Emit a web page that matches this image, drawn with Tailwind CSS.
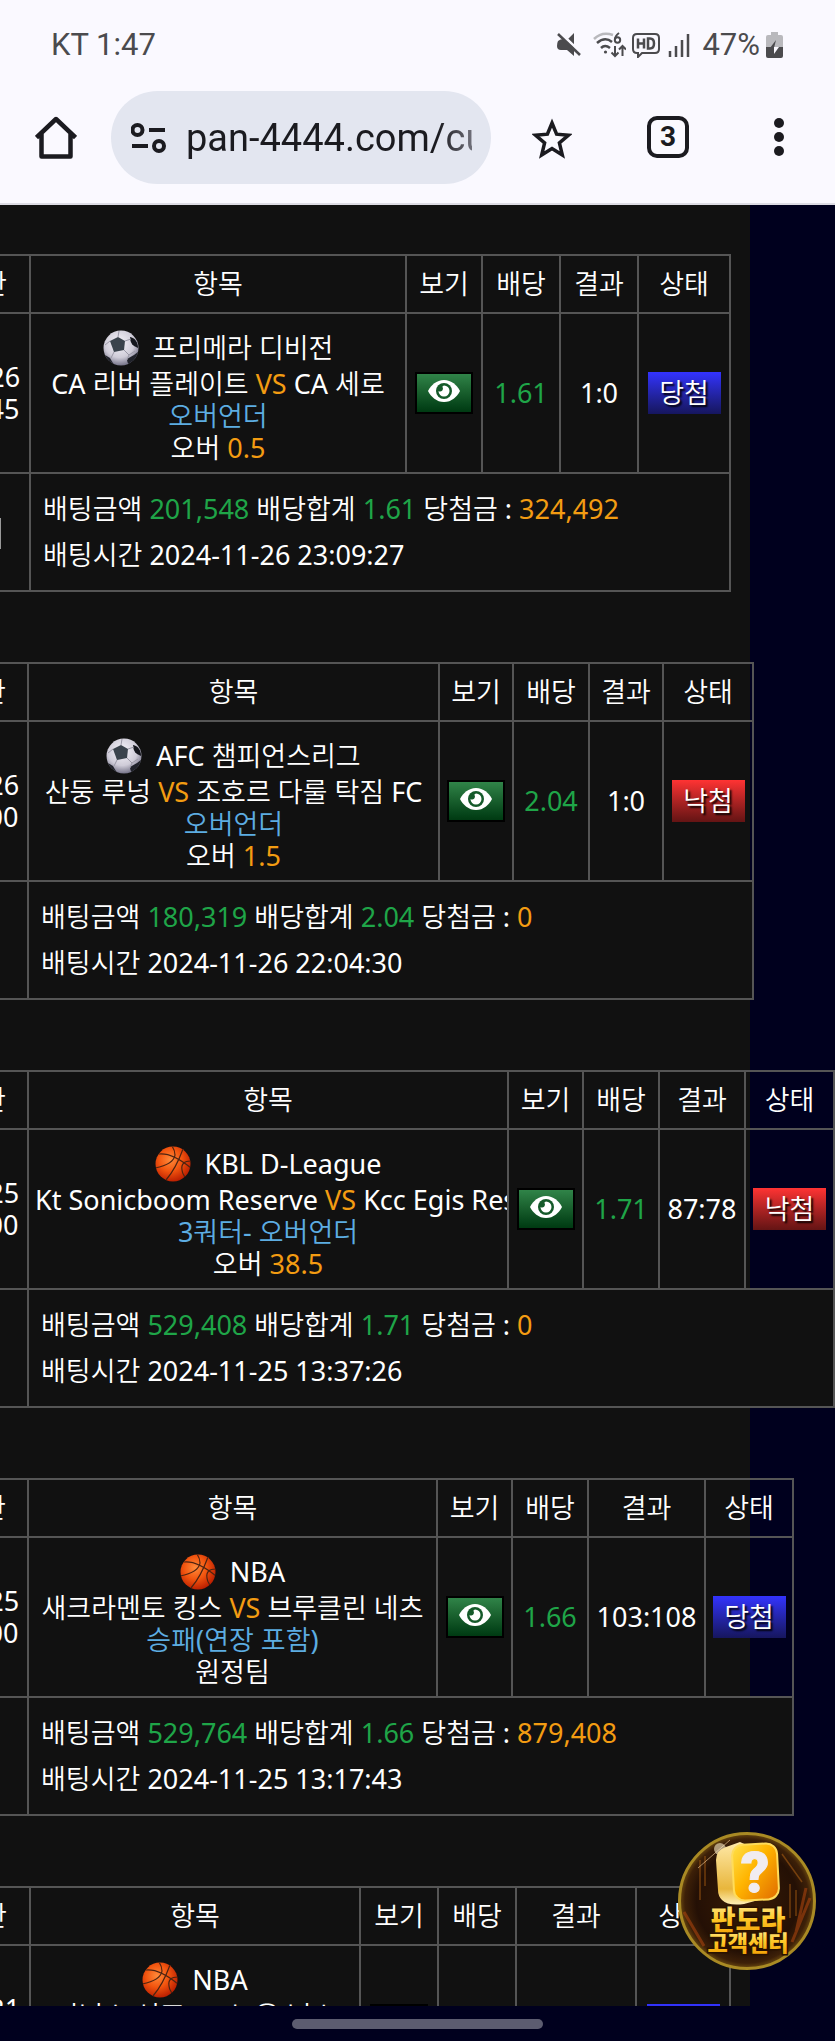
<!doctype html>
<html lang="ko">
<head>
    <meta charset="UTF-8">
    <meta name="viewport" content="width=device-width, initial-scale=1">
    <title>배팅내역</title>
    <script src="https://cdn.jsdelivr.net/npm/@tailwindcss/browser@4"></script>
</head>
<body class="flex h-screen flex-col overflow-hidden bg-[#00001e] font-['Noto_Sans','Noto_Sans_CJK_KR_DemiLight','Noto_Sans_CJK_KR',sans-serif]">
    <!-- shared shapes -->
    <svg class="absolute size-0" aria-hidden="true">
        <defs>
            <radialGradient id="ball-white" cx="45%" cy="35%" r="65%">
                <stop offset="0" stop-color="#f6f4fa"/>
                <stop offset="0.65" stop-color="#cfccd8"/>
                <stop offset="1" stop-color="#77758a"/>
            </radialGradient>
            <radialGradient id="ball-orange" cx="42%" cy="38%" r="65%">
                <stop offset="0" stop-color="#ff8a3a"/>
                <stop offset="0.5" stop-color="#f2550f"/>
                <stop offset="1" stop-color="#b81c00"/>
            </radialGradient>
            <clipPath id="ball-clip"><circle cx="18" cy="18" r="17.5"/></clipPath>
            <linearGradient id="gold-text" x1="0" y1="0" x2="0" y2="1">
                <stop offset="0" stop-color="#fff3b0"/>
                <stop offset="0.5" stop-color="#ffc928"/>
                <stop offset="1" stop-color="#f09a00"/>
            </linearGradient>
            <linearGradient id="cube" x1="0" y1="0" x2="1" y2="1">
                <stop offset="0" stop-color="#ffe14a"/>
                <stop offset="0.45" stop-color="#ffb400"/>
                <stop offset="1" stop-color="#e06a00"/>
            </linearGradient>
            <linearGradient id="cube-side" x1="0" y1="0" x2="0" y2="1">
                <stop offset="0" stop-color="#ffe9a8"/>
                <stop offset="0.75" stop-color="#e8b63c"/>
                <stop offset="1" stop-color="#fff0b8"/>
            </linearGradient>
            <radialGradient id="coin" cx="50%" cy="50%" r="50%">
                <stop offset="0" stop-color="#3a1c05"/>
                <stop offset="0.75" stop-color="#241005"/>
                <stop offset="0.92" stop-color="#3d2008"/>
                <stop offset="1" stop-color="#6b4a10"/>
            </radialGradient>
        </defs>
        <symbol id="soccer" viewBox="0 0 36 36">
            <circle cx="18" cy="18" r="17.5" fill="url(#ball-white)"/>
            <g clip-path="url(#ball-clip)">
                <path d="M7 11l8-4 7 4-1 9-10 2z" fill="#3a434c"/>
                <path d="M27 7c5 1 8 5 8 11l-4-2c-3-2-4-6-4-9z" fill="#15171d"/>
                <path d="M24 29l7-4 4-3v8l-8 5c-2-1-3-3-3-6z" fill="#20222a"/>
                <path d="M2 25l5 3 4 7-6-2z" fill="#20222a"/>
                <path d="M15 7l1-6M22 11l6-2M21 20l5 5-2 5M11 22l-3 6M7 11L2 15M26 25l6-4" fill="none" stroke="#9a98a6" stroke-width="1"/>
            </g>
        </symbol>
        <symbol id="basket" viewBox="0 0 36 36">
            <circle cx="18" cy="18" r="17.5" fill="url(#ball-orange)"/>
            <g clip-path="url(#ball-clip)" fill="none" stroke="#4d2412" stroke-width="1.2">
                <path d="M4 8c9-1 21 5 32 14"/>
                <path d="M0 22c10-2 19-5 20-13 0-4-1-6-3-9"/>
                <path d="M28 3C24 14 18 26 11 34"/>
                <path d="M36 15c-7 0-10 3-9 9 0 4 3 7 4 9"/>
            </g>
        </symbol>
        <symbol id="eye" viewBox="0 0 32 22">
            <path d="M16 0C8.600 0 3 5 0 11c3 6 8.600 11 16 11s13-5 16-11C29 5 23.400 0 16 0z" fill="#fff"/>
            <circle cx="16" cy="11" r="8" fill="#155a2a"/>
            <path d="M16 5.500a5.500 5.500 0 1 1-5.500 5.500c1 .8 2.600.8 3.600-.2s1.200-2.800.2-4c.5-.7 1.100-1.100 1.700-1.300z" fill="#fff"/>
        </symbol>
    </svg>

    <header class="border-b-2 border-[#dddce4] bg-[#faf9ff] font-[Roboto,sans-serif] text-[#1b1b20]">
        <div class="flex h-[90px] items-center justify-between pr-[52px] pl-[51px] text-[31px] text-[#4b4b4e]">
            <span>KT 1:47</span>
            <div class="flex items-center gap-[6px]">
                <svg class="mr-[6px] h-[26px] w-[24px]" viewBox="0 0 24 26" fill="currentColor">
                    <path d="M1 9q2-2 6-2l10 9v8l-7-6H4q-4 0-4-4 0-3 1-5zM11 7l6-6v12z"/>
                    <path d="M4 1l20 19.500" stroke="#faf9ff" stroke-width="2"/>
                    <path d="M1 2l22 21" stroke="currentColor" stroke-width="2.500"/>
                </svg>
                <svg class="h-[26px] w-[33px]" viewBox="0 0 33 26" fill="none" stroke="currentColor" stroke-width="2.500">
                    <path d="M1 7Q9-1 20 3" stroke="#b9b9bd"/>
                    <path d="M4 11q8-7 15-1M8 16q4-4 9 0"/>
                    <circle cx="12.500" cy="20" r="1.600" fill="currentColor" stroke="none"/>
                    <path d="M26 1q-4 3-4 6.500" stroke-width="2"/>
                    <circle cx="24.500" cy="8" r="2.700" stroke-width="2"/>
                    <path d="M22 14v10M18.500 20.500L22 24l3.500-3.500M29.500 24V14M26 17.500l3.500-3.500 3.500 3.500" stroke-width="2"/>
                </svg>
                <svg class="h-[26px] w-[28px]" viewBox="0 0 28 26" fill="none" stroke="currentColor" stroke-width="2">
                    <path d="M5 2h18q4 0 4 4v11q0 4-4 4H10l-4 4v-4H5q-4 0-4-4V6q0-4 4-4z"/>
                    <path d="M6 6.500v10M12 6.500v10M6 11.500h6M16 6.500v10h2q4 0 4-5t-4-5z" stroke-width="2.500"/>
                </svg>
                <svg class="mr-[6px] ml-[2px] h-[24px] w-[22px]" viewBox="0 0 22 24" stroke="currentColor" stroke-width="2.500">
                    <path d="M2 18v6M8 13v11M14 7v17M20 1v23"/>
                </svg>
                <span>47%</span>
                <svg class="h-[26px] w-[17px]" viewBox="0 0 17 26">
                    <path d="M5 0h7v3h3q2 0 2 2v11H0V5q0-2 2-2h3z" fill="#b9b9bd"/>
                    <path d="M0 15h17v9q0 2-2 2H2q-2 0-2-2z" fill="#4b4b4e"/>
                    <path d="M10 8l-6 8h4z" fill="#4b4b4e"/>
                    <path d="M8 22l5-7H8z" fill="#faf9ff"/>
                </svg>
            </div>
        </div>
        <div class="flex h-[113px] items-start gap-[34px] pt-[1px] pr-[51px] pl-[35px]">
            <a href="#" aria-label="홈" class="mt-[24px] shrink-0">
                <svg class="h-[44px] w-[42px]" viewBox="0 0 42 44" fill="none" stroke="currentColor" stroke-width="4.500" stroke-linejoin="round">
                    <path d="M1.500 22.500L21 4l19.500 18.500M6.500 19v22.500h29V19"/>
                </svg>
            </a>
            <label class="flex h-[93px] min-w-0 flex-1 items-center gap-[20px] rounded-full bg-[#e3e6f0] pr-[19px] pl-[20px]">
                <svg class="h-[30px] w-[35px] shrink-0" viewBox="0 0 35 30" fill="none" stroke="currentColor" stroke-width="4">
                    <circle cx="6.500" cy="7" r="5"/>
                    <path d="M18 7h16M1 23h16"/>
                    <circle cx="28" cy="23" r="5"/>
                </svg>
                <input type="text" aria-label="주소" value="pan-4444.com/customer" class="w-full min-w-0 bg-linear-to-r from-[#1b1b20] from-88% to-[#70707a] bg-clip-text pt-[2px] text-[38px] text-transparent outline-none">
            </label>
            <div class="mt-[24px] ml-[7px] flex shrink-0 items-center gap-[75px]">
                <button aria-label="북마크">
                    <svg class="h-[44px] w-[40px]" viewBox="0 0 40 44" fill="none" stroke="currentColor" stroke-width="3.500">
                        <path d="M20 8l4.600 11.200 12 1-9.200 7.800 2.900 11.900L20 33.500 9.700 39.900 12.600 28l-9.200-7.800 12-1z"/>
                    </svg>
                </button>
                <button class="flex h-[42px] w-[42px] items-center justify-center rounded-[10px] border-4 border-[#1b1b20] text-[28px] font-bold">3</button>
                <button aria-label="메뉴" class="ml-[10px] flex h-[44px] w-[10px] flex-col items-center justify-center gap-[4px]">
                    <span class="size-[10px] shrink-0 rounded-full bg-[#1b1b20]"></span>
                    <span class="size-[10px] shrink-0 rounded-full bg-[#1b1b20]"></span>
                    <span class="size-[10px] shrink-0 rounded-full bg-[#1b1b20]"></span>
                </button>
            </div>
        </div>
    </header>

    <main class="relative min-h-0 flex-1 overflow-hidden text-[27px] leading-[32px] text-white">
        <div id="history" class="mr-[85px] flex min-h-full flex-col gap-[70px] bg-[#111] pt-[49px]"></div>

        <button aria-label="판도라 고객센터" class="absolute right-[19px] bottom-[36px] size-[138px]">
            <svg class="size-full" viewBox="0 0 138 138">
                <circle cx="69" cy="69" r="67.500" fill="url(#coin)" stroke="#a98a24" stroke-width="3"/>
                <path d="M22 28v40M27 24v30M112 52v34M118 58v26M104 22l20 28" stroke="#a35a12" stroke-width="1.500" opacity="0.600"/>
                <path d="M6 80l20 34M132 66l-18 44M128 56l-10 44" stroke="#a8430e" stroke-width="3" opacity="0.600"/>
                <path d="M20 36L52 8" stroke="#ffd9a0" stroke-width="1" opacity="0.600"/>
                <circle cx="42" cy="17" r="6" fill="#fff0c8" opacity="0.600"/>
                <path d="M38 28q0-10 10-13l14-5 26 12v44l-22 6q-16 2-22-4-4-4-4-10z" fill="url(#cube-side)"/>
                <rect x="55" y="12" width="45" height="56" rx="11" fill="url(#cube)" stroke="#ffdc5a" stroke-width="2" transform="rotate(-3 78 40)"/>
                <text x="77" y="60" text-anchor="middle" font-family="Roboto, sans-serif" font-size="56" font-weight="900" fill="#f1ecf0" stroke="#f1ecf0" stroke-width="1">?</text>
                <g font-family="'Noto Sans CJK KR', sans-serif" font-weight="900" text-anchor="middle" fill="url(#gold-text)" stroke="#2a1200" stroke-width="3" paint-order="stroke">
                    <text x="70" y="98" font-size="27">판도라</text>
                    <text x="70" y="119" font-size="22">고객센터</text>
                </g>
            </svg>
        </button>
    </main>

    <footer class="flex h-[35px] shrink-0 items-center justify-center">
        <div class="h-[10px] w-[30%] rounded-full bg-[#5c5c70]"></div>
    </footer>

    <script>
        const bets = [
            { cols: [96, 376, 76, 78, 78, 92], date: "11-26", time: "22:45", ball: "soccer", league: "프리메라 디비전", home: "CA 리버 플레이트", away: "CA 세로", type: "오버언더", pick: "오버", line: "0.5", odds: "1.61", score: "1:0", win: true, amount: "201,548", prize: "324,492", at: "2024-11-26 23:09:27", cancel: true },
            { cols: [94, 411, 74, 76, 74, 90], date: "11-26", time: "21:00", ball: "soccer", league: "AFC 챔피언스리그", home: "산둥 루넝", away: "조호르 다룰 탁짐 FC", type: "오버언더", pick: "오버", line: "1.5", odds: "2.04", score: "1:0", win: false, amount: "180,319", prize: "0", at: "2024-11-26 22:04:30" },
            { cols: [94, 480, 75, 76, 86, 89], date: "11-25", time: "13:00", ball: "basket", league: "KBL D-League", home: "Kt Sonicboom Reserve", away: "Kcc Egis Reserve", type: "3쿼터- 오버언더", pick: "오버", line: "38.5", odds: "1.71", score: "87:78", win: false, amount: "529,408", prize: "0", at: "2024-11-25 13:37:26" },
            { cols: [94, 409, 75, 76, 117, 88], date: "11-25", time: "12:00", ball: "basket", league: "NBA", home: "새크라멘토 킹스", away: "브루클린 네츠", type: "승패(연장 포함)", pick: "원정팀", line: "", odds: "1.66", score: "103:108", win: true, amount: "529,764", prize: "879,408", at: "2024-11-25 13:17:43" },
            { cols: [96, 330, 78, 78, 120, 94], date: "11-21", time: "12:00", ball: "basket", league: "NBA", home: "피닉스 선즈", away: "뉴욕 닉스", type: "승패(연장 포함)", pick: "홈팀", line: "", odds: "1.80", score: "120:108", win: true, amount: "500,000", prize: "900,000", at: "2024-11-21 12:02:10" },
        ];

        const cell = "overflow-hidden border-2 border-[#555] p-0 whitespace-nowrap";

        const renderBet = (bet) => `
            <table class="-ml-[67px] w-max table-fixed shrink-0 self-start border-collapse text-center">
                <colgroup>${bet.cols.map(w => `<col style="width:${w}px">`).join("")}</colgroup>
                <thead>
                    <tr class="h-[58px]">
                        ${["시간", "항목", "보기", "배당", "결과", "상태"].map(h => `<th class="${cell} font-normal">${h}</th>`).join("")}
                    </tr>
                </thead>
                <tbody>
                    <tr class="h-[160px]">
                        <td class="${cell} pl-[6px]">${bet.date}<br>${bet.time}</td>
                        <td class="${cell}">
                            <div class="flex w-0 min-w-full flex-col items-center pt-[6px]">
                                <div class="flex h-[40px] items-center gap-[14px]">
                                    <svg class="size-[36px]"><use href="#${bet.ball}"/></svg>
                                    <span>${bet.league}</span>
                                </div>
                                <div class="w-full px-[6px]">${bet.home} <span class="text-[#f39c12]">VS</span> ${bet.away}</div>
                                <div class="text-[#5dade2]">${bet.type}</div>
                                <div>${bet.pick} <span class="text-[#f39c12]">${bet.line}</span></div>
                            </div>
                        </td>
                        <td class="${cell}">
                            <button aria-label="보기" class="inline-flex h-[42px] w-[58px] items-center justify-center border-2 border-black bg-linear-to-b from-[#308448] to-[#003a12] pb-[4px] align-middle">
                                <svg class="h-[22px] w-[32px]"><use href="#eye"/></svg>
                            </button>
                        </td>
                        <td class="${cell} text-[#1fa548]">${bet.odds}</td>
                        <td class="${cell}">${bet.score}</td>
                        <td class="${cell}">
                            <span class="inline-flex h-[42px] w-[73px] items-center justify-center bg-linear-to-b align-middle text-shadow-[2px_2px_2px_#000] ${bet.win ? "from-[#3333ff] to-[#16165e]" : "from-[#ff3333] to-[#641414]"}">${bet.win ? "당첨" : "낙첨"}</span>
                        </td>
                    </tr>
                    <tr class="h-[118px] bg-[#111]">
                        <td class="${cell}">${bet.cancel ? '<button class="h-[31px] w-[38px] border border-[#999] align-middle text-[14px] leading-none">취소</button>' : ""}</td>
                        <td colspan="5" class="${cell} pl-[12px] text-left leading-[46px]">
                            배팅금액 <span class="text-[#1fa548]">${bet.amount}</span> 배당합계 <span class="text-[#1fa548]">${bet.odds}</span> 당첨금 : <span class="text-[#f39c12]">${bet.prize}</span><br>
                            배팅시간 ${bet.at}
                        </td>
                    </tr>
                </tbody>
            </table>`;

        document.getElementById("history").innerHTML = bets.map(renderBet).join("");
    </script>
</body>
</html>
